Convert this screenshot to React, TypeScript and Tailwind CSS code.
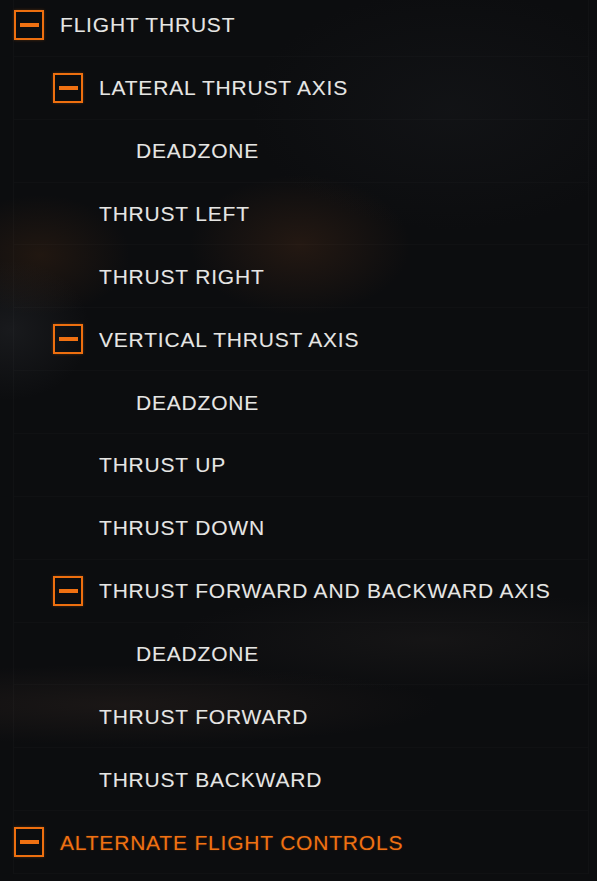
import React from 'react'

type Row = {
  label: string
  level: 0 | 1 | 2
  group?: boolean
  accent?: boolean
}

const ROWS: Row[] = [
  { label: 'FLIGHT THRUST', level: 0, group: true },
  { label: 'LATERAL THRUST AXIS', level: 1, group: true },
  { label: 'DEADZONE', level: 2 },
  { label: 'THRUST LEFT', level: 1 },
  { label: 'THRUST RIGHT', level: 1 },
  { label: 'VERTICAL THRUST AXIS', level: 1, group: true },
  { label: 'DEADZONE', level: 2 },
  { label: 'THRUST UP', level: 1 },
  { label: 'THRUST DOWN', level: 1 },
  { label: 'THRUST FORWARD AND BACKWARD AXIS', level: 1, group: true },
  { label: 'DEADZONE', level: 2 },
  { label: 'THRUST FORWARD', level: 1 },
  { label: 'THRUST BACKWARD', level: 1 },
  { label: 'ALTERNATE FLIGHT CONTROLS', level: 0, group: true, accent: true },
]

function Toggle() {
  return (
    <div className="w-[30px] h-[30px] shrink-0 border-2 border-[#ee6f0f] flex items-center justify-center shadow-[0_0_3px_rgba(238,111,15,0.3)]">
      <div className="w-[19px] h-[4px] bg-[#f07112]" />
    </div>
  )
}

function TreeRow({ row }: { row: Row }) {
  // group rows carry the box, leaves just sit at the text column
  const pad =
    row.level === 0 ? 'pl-0' : row.level === 2 ? 'pl-[122px]' : row.group ? 'pl-[39px]' : 'pl-[85px]'

  return (
    <div className={`h-[62.86px] flex items-center gap-[16px] border-b border-white/[0.018] ${pad}`}>
      {row.group && <Toggle />}
      <span
        className={`text-[21px] tracking-[0.8px] leading-none whitespace-nowrap ${
          row.accent
            ? 'text-[#f07112] [text-shadow:0_0_2px_rgba(240,113,18,0.3)]'
            : 'text-[#e6e6e4] [text-shadow:0_0_1px_rgba(255,255,255,0.15)]'
        }`}
        style={{ fontFamily: '"Liberation Sans", Arial, sans-serif' }}
      >
        {row.label}
      </span>
    </div>
  )
}

export default function App() {
  return (
    <div className="w-[597px] h-[881px] overflow-hidden bg-[#0c0d0f] bg-[radial-gradient(ellipse_110px_70px_at_300px_245px,rgba(90,50,25,0.3),transparent),radial-gradient(ellipse_90px_60px_at_40px_255px,rgba(80,45,20,0.3),transparent),radial-gradient(ellipse_80px_70px_at_10px_330px,rgba(70,72,78,0.22),transparent),radial-gradient(ellipse_320px_40px_at_120px_705px,rgba(60,45,38,0.3),transparent),radial-gradient(ellipse_260px_50px_at_430px_640px,rgba(45,40,38,0.28),transparent),radial-gradient(ellipse_200px_120px_at_450px_110px,rgba(30,32,36,0.3),transparent)]">
      <div className="ml-[13px] w-[576px] -mt-[6px] border-l border-r border-white/[0.025]">
        {ROWS.map((row, i) => (
          <TreeRow key={i} row={row} />
        ))}
      </div>
    </div>
  )
}
